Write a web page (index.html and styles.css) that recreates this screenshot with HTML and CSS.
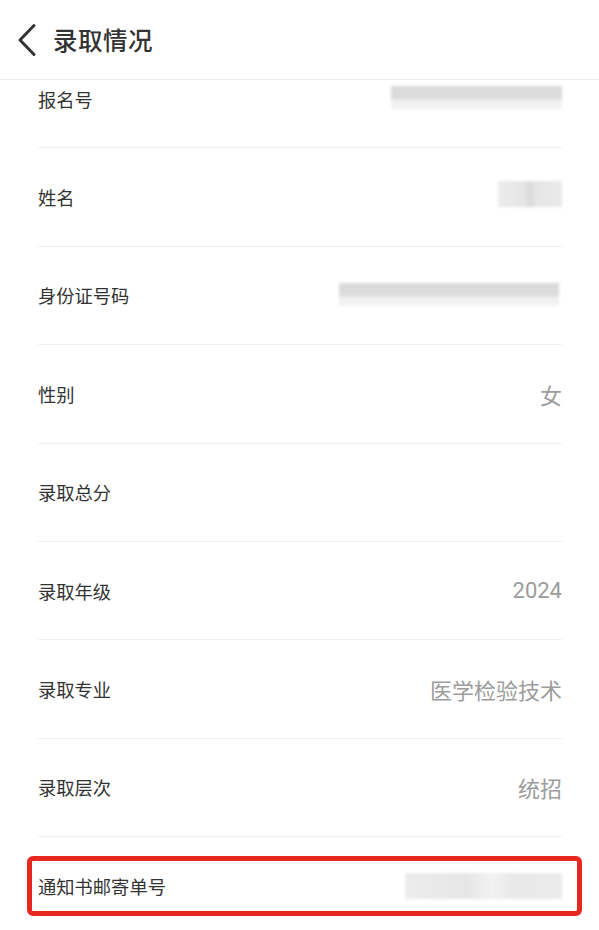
FILE: index.html
```html
<!DOCTYPE html>
<html lang="zh-CN">
<head>
<meta charset="utf-8">
<title>录取情况</title>
<link rel="stylesheet" href="styles.css">
</head>
<body>
<header class="topbar">
  <svg class="back" width="24" height="34" viewBox="0 0 24 34"><path d="M19 2.5 L5 17 L19 31.5" fill="none" stroke="#333" stroke-width="3" stroke-linecap="round" stroke-linejoin="round"/></svg>
  <h1 class="title">录取情况</h1>
</header>
<main class="list">
  <div class="row"><span class="label">报名号</span><span class="blur blur-id1"></span></div>
  <div class="row"><span class="label">姓名</span><span class="blur blur-name"></span></div>
  <div class="row"><span class="label">身份证号码</span><span class="blur blur-card"></span></div>
  <div class="row"><span class="label">性别</span><span class="value">女</span></div>
  <div class="row"><span class="label">录取总分</span><span class="value"></span></div>
  <div class="row"><span class="label">录取年级</span><span class="value">2024</span></div>
  <div class="row"><span class="label">录取专业</span><span class="value">医学检验技术</span></div>
  <div class="row"><span class="label">录取层次</span><span class="value">统招</span></div>
  <div class="row row-mark"><span class="label">通知书邮寄单号</span><span class="blur blur-mail"></span></div>
</main>
</body>
</html>
```
FILE: styles.css
```css
html, body {
  margin: 0;
  padding: 0;
  background: #fff;
  font-family: "Noto Sans CJK SC", "Noto Sans", sans-serif;
  overflow: hidden;
}
.topbar {
  position: fixed;
  top: 0;
  left: 0;
  right: 0;
  height: 79px;
  background: #fff;
  border-bottom: 1px solid #ececec;
  display: flex;
  align-items: center;
  padding-left: 15px;
  gap: 14px;
  z-index: 2;
}
.back {
  display: block;
  margin-top: 1px;
}
.title {
  margin: 0;
  font-size: 24.5px;
  font-weight: 500;
  color: #333;
  letter-spacing: 0.5px;
}
.list {
  padding-top: 50px;
}
.row {
  position: relative;
  box-sizing: border-box;
  height: 98.4px;
  margin: 0 37px 0 38px;
  border-bottom: 1px solid #efefef;
  display: flex;
  align-items: center;
  justify-content: space-between;
}
.label {
  font-size: 18.3px;
  color: #333;
}
.value {
  font-family: Roboto, "Noto Sans CJK SC", sans-serif;
  font-size: 22px;
  color: #9c9c9c;
}
.blur {
  display: block;
  background: linear-gradient(180deg, #d9d9d9 0%, #dcdcdc 55%, #efefef 62%, #f3f3f3 100%);
  filter: blur(1.5px);
}
.blur-id1 { width: 171px; height: 23px; margin-top: -2px; }
.blur-name { width: 64px; height: 26px; margin-top: -6px; background: linear-gradient(90deg, #ececec 0%, #e6e6e6 40%, #d9d9d9 50%, #e6e6e6 60%, #e9e9e9 100%); }
.blur-card { width: 220px; height: 23px; margin-right: 3px; margin-top: -1px; }
.blur-mail { width: 157px; height: 26px; background: linear-gradient(90deg, #ececec 0%, #e6e6e6 40%, #f2f2f2 55%, #e8e8e8 70%, #ebebeb 100%); }
.row-mark::after {
  content: "";
  position: absolute;
  left: -11px;
  right: -20px;
  top: 19px;
  height: 60px;
  border: 5px solid #e8281f;
  border-radius: 6px;
  box-sizing: border-box;
}
```
